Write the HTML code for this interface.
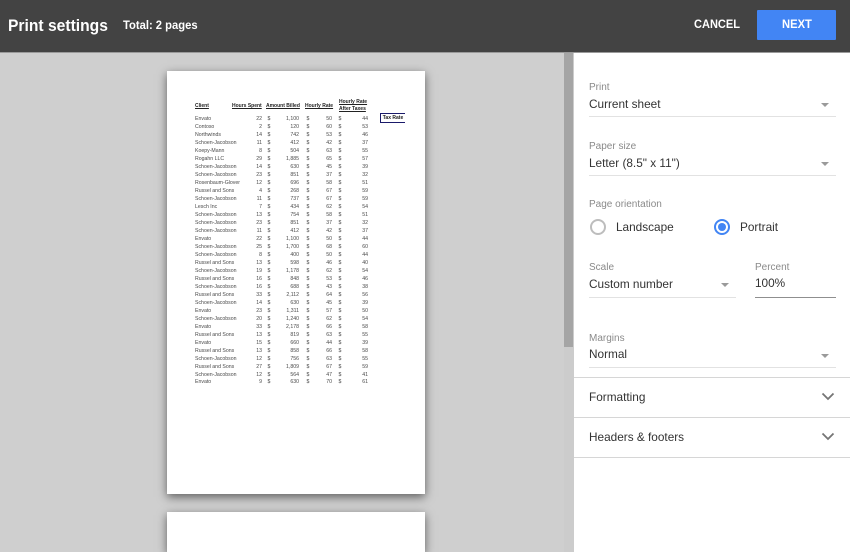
<!DOCTYPE html>
<html style="width:850px;height:552px;overflow:hidden"><head><meta charset="utf-8"><title>Print settings</title>
<style>
html,body{margin:0;padding:0}
body{width:850px;height:552px;overflow:hidden;position:relative;background:#cfcfcf;font-family:"Liberation Sans",sans-serif}
.a{position:absolute;white-space:nowrap}
#hdr{left:0;top:0;width:850px;height:52px;background:#434343;border-bottom:1px solid #9a9a9a}
#side{left:574px;top:53px;width:276px;height:499px;background:#fff}
#track{left:564px;top:53px;width:10px;height:499px;background:#cccccc}
#thumb{left:564px;top:53px;width:9px;height:294px;background:#a5a5a5}
.page{position:absolute;left:167px;width:258px;background:#fff;box-shadow:0 3px 9px rgba(0,0,0,.55)}
.lbl{font-size:10px;color:#8a8a8a;line-height:12px}
.val{font-size:11.8px;color:#333;line-height:15px}
.ln{height:1px;background:#e2e2e2}
.tri{width:0;height:0;border-left:4px solid transparent;border-right:4px solid transparent;border-top:4px solid #9a9a9a}
.hr{left:574px;width:276px;height:1px;background:#d6d6d6}
#sheet{position:absolute;left:0;top:0;filter:blur(.35px)}
.c{position:absolute;font-size:5.2px;line-height:7px;color:#4a4a4a;white-space:nowrap}
.r{text-align:right}
.h{font-size:5px;font-weight:bold;color:#222;text-decoration:underline}
.sx{transform-origin:0 50%;transform:scaleX(.92)}
</style></head><body>
<div class="a" id="track"></div><div class="a" id="thumb"></div>
<div class="page" style="top:71px;height:423px"></div>
<div class="page" style="top:512px;height:40px"></div>
<div id="sheet">
<div class="c h" style="left:195px;top:103px">Client</div>
<div class="c h" style="left:232px;top:103px">Hours Spent</div>
<div class="c h" style="left:266px;top:103px">Amount Billed</div>
<div class="c h" style="left:305px;top:103px">Hourly Rate</div>
<div class="c h" style="left:339px;top:99px">Hourly Rate</div>
<div class="c h" style="left:339px;top:106px">After Taxes</div>
<div class="c h" style="left:380px;top:113px;width:24px;height:8px;border:1px solid #1a1a6a;border-width:1px 0 1px 1px;text-decoration:none;text-align:center;line-height:8px;color:#222">Tax Rate</div>
<div class="c" style="left:195px;top:116px;line-height:7.98px">Envato<br>Contoso<br>Northwinds<br>Schoen-Jacobson<br>Koepy-Mann<br>Rogahn LLC<br>Schoen-Jacobson<br>Schoen-Jacobson<br>Rosenbaum-Glover<br>Russel and Sons<br>Schoen-Jacobson<br>Lesch Inc<br>Schoen-Jacobson<br>Schoen-Jacobson<br>Schoen-Jacobson<br>Envato<br>Schoen-Jacobson<br>Schoen-Jacobson<br>Russel and Sons<br>Schoen-Jacobson<br>Russel and Sons<br>Schoen-Jacobson<br>Russel and Sons<br>Schoen-Jacobson<br>Envato<br>Schoen-Jacobson<br>Envato<br>Russel and Sons<br>Envato<br>Russel and Sons<br>Schoen-Jacobson<br>Russel and Sons<br>Schoen-Jacobson<br>Envato</div>
<div class="c r" style="left:242px;width:20px;top:116px;line-height:7.98px">22<br>2<br>14<br>11<br>8<br>29<br>14<br>23<br>12<br>4<br>11<br>7<br>13<br>23<br>11<br>22<br>25<br>8<br>13<br>19<br>16<br>16<br>33<br>14<br>23<br>20<br>33<br>13<br>15<br>13<br>12<br>27<br>12<br>9</div>
<div class="c" style="left:267.5px;top:116px;line-height:7.98px">$<br>$<br>$<br>$<br>$<br>$<br>$<br>$<br>$<br>$<br>$<br>$<br>$<br>$<br>$<br>$<br>$<br>$<br>$<br>$<br>$<br>$<br>$<br>$<br>$<br>$<br>$<br>$<br>$<br>$<br>$<br>$<br>$<br>$</div>
<div class="c r" style="left:274px;width:25px;top:116px;line-height:7.98px">1,100<br>120<br>742<br>412<br>504<br>1,885<br>630<br>851<br>696<br>268<br>737<br>434<br>754<br>851<br>412<br>1,100<br>1,700<br>400<br>598<br>1,178<br>848<br>688<br>2,112<br>630<br>1,311<br>1,240<br>2,178<br>819<br>660<br>858<br>756<br>1,809<br>564<br>630</div>
<div class="c" style="left:306.5px;top:116px;line-height:7.98px">$<br>$<br>$<br>$<br>$<br>$<br>$<br>$<br>$<br>$<br>$<br>$<br>$<br>$<br>$<br>$<br>$<br>$<br>$<br>$<br>$<br>$<br>$<br>$<br>$<br>$<br>$<br>$<br>$<br>$<br>$<br>$<br>$<br>$</div>
<div class="c r" style="left:312px;width:20px;top:116px;line-height:7.98px">50<br>60<br>53<br>42<br>63<br>65<br>45<br>37<br>58<br>67<br>67<br>62<br>58<br>37<br>42<br>50<br>68<br>50<br>46<br>62<br>53<br>43<br>64<br>45<br>57<br>62<br>66<br>63<br>44<br>66<br>63<br>67<br>47<br>70</div>
<div class="c" style="left:338.5px;top:116px;line-height:7.98px">$<br>$<br>$<br>$<br>$<br>$<br>$<br>$<br>$<br>$<br>$<br>$<br>$<br>$<br>$<br>$<br>$<br>$<br>$<br>$<br>$<br>$<br>$<br>$<br>$<br>$<br>$<br>$<br>$<br>$<br>$<br>$<br>$<br>$</div>
<div class="c r" style="left:348px;width:20px;top:116px;line-height:7.98px">44<br>53<br>46<br>37<br>55<br>57<br>39<br>32<br>51<br>59<br>59<br>54<br>51<br>32<br>37<br>44<br>60<br>44<br>40<br>54<br>46<br>38<br>56<br>39<br>50<br>54<br>58<br>55<br>39<br>58<br>55<br>59<br>41<br>61</div>
</div>
<div class="a" id="hdr"></div>
<div class="a sx" style="left:8px;top:16px;font-size:17px;line-height:20px;font-weight:bold;color:#fff">Print settings</div>
<div class="a sx" style="left:123px;top:18px;font-size:12.2px;line-height:15px;font-weight:bold;color:#fff">Total: 2 pages</div>
<div class="a sx" style="left:694px;top:17px;font-size:12px;line-height:15px;font-weight:bold;color:#fff">CANCEL</div>
<div class="a" style="left:757px;top:10px;width:79px;height:30px;background:#4285f4;border-radius:1px"></div>
<div class="a sx" style="left:782px;top:17px;font-size:12.2px;line-height:15px;font-weight:bold;color:#fff">NEXT</div>
<div class="a" id="side"></div>
<div class="a lbl" style="left:589px;top:82px">Print</div>
<div class="a val" style="left:589px;top:97px">Current sheet</div>
<div class="a tri" style="left:821px;top:103px"></div>
<div class="a ln" style="left:589px;top:116px;width:247px"></div>
<div class="a lbl" style="left:589px;top:141px">Paper size</div>
<div class="a val" style="left:589px;top:156px">Letter (8.5" x 11")</div>
<div class="a tri" style="left:821px;top:162px"></div>
<div class="a ln" style="left:589px;top:175px;width:247px"></div>
<div class="a lbl" style="left:589px;top:199px">Page orientation</div>
<div class="a" style="left:590px;top:219px;width:12px;height:12px;border:2px solid #bdbdbd;border-radius:50%"></div>
<div class="a val" style="left:616px;top:220px">Landscape</div>
<div class="a" style="left:714px;top:219px;width:12px;height:12px;border:2px solid #4285f4;border-radius:50%"></div>
<div class="a" style="left:718px;top:223px;width:8px;height:8px;background:#4285f4;border-radius:50%"></div>
<div class="a val" style="left:740px;top:220px">Portrait</div>
<div class="a lbl" style="left:589px;top:262px">Scale</div>
<div class="a val" style="left:589px;top:277px">Custom number</div>
<div class="a tri" style="left:721px;top:283px"></div>
<div class="a ln" style="left:589px;top:297px;width:147px"></div>
<div class="a lbl" style="left:755px;top:262px">Percent</div>
<div class="a val" style="left:755px;top:276px">100%</div>
<div class="a ln" style="left:755px;top:297px;width:81px;background:#8f8f8f"></div>
<div class="a lbl" style="left:589px;top:333px">Margins</div>
<div class="a val" style="left:589px;top:347px">Normal</div>
<div class="a tri" style="left:821px;top:354px"></div>
<div class="a ln" style="left:589px;top:367px;width:247px"></div>
<div class="a hr" style="top:377px"></div>
<div class="a val" style="left:589px;top:390px">Formatting</div>
<svg class="a" style="left:821px;top:392px" width="14" height="10" viewBox="0 0 14 10"><path d="M1.5 1.5 7 7l5.5-5.5" fill="none" stroke="#757575" stroke-width="1.8"/></svg>
<div class="a hr" style="top:417px"></div>
<div class="a val" style="left:589px;top:430px">Headers &amp; footers</div>
<svg class="a" style="left:821px;top:432px" width="14" height="10" viewBox="0 0 14 10"><path d="M1.5 1.5 7 7l5.5-5.5" fill="none" stroke="#757575" stroke-width="1.8"/></svg>
<div class="a hr" style="top:457px"></div>
</body></html>
